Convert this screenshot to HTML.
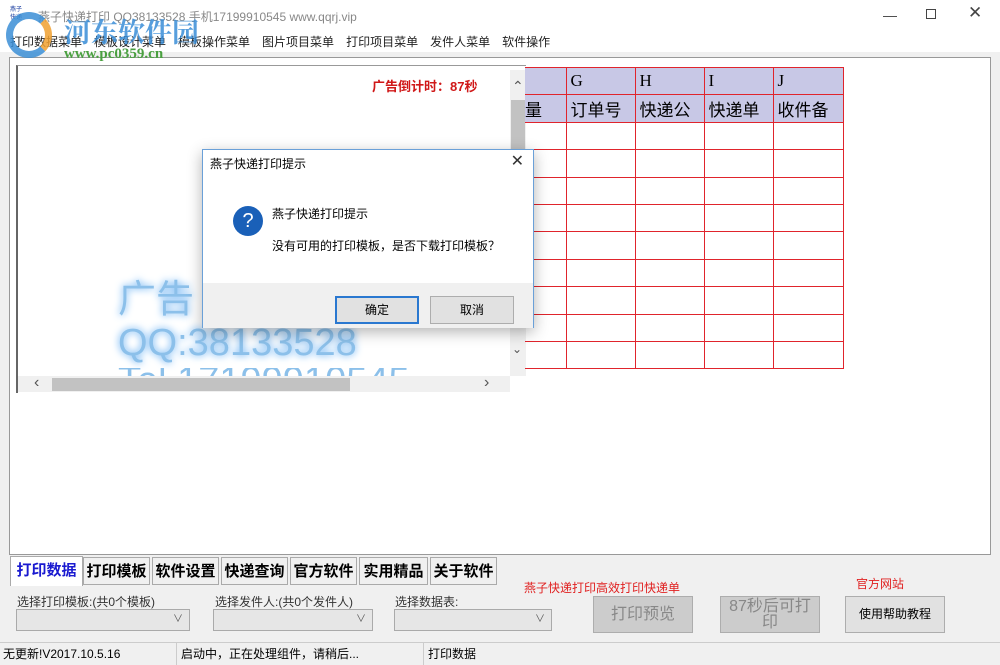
<!DOCTYPE html>
<html><head><meta charset="utf-8"><style>
*{margin:0;padding:0;box-sizing:border-box}
body{width:1000px;height:664px;background:#f0f0f0;font-family:"Liberation Sans","Noto Sans CJK SC",sans-serif;font-size:12px;color:#000;position:relative;overflow:hidden}
.a{position:absolute}
.menu span{margin-right:12px}
table{border-collapse:collapse;table-layout:fixed;font-family:"Liberation Serif","Noto Serif CJK SC",serif}
td{border:1px solid #e0242c;height:27.4px;width:69px;padding:0 4px;font-size:17px;white-space:nowrap;overflow:hidden;line-height:24px}
.hd td{background:#c8c8e6}
.tab{position:absolute;top:557px;height:28px;border:1px solid #aaa;background:#f0f0f0;font-size:15px;font-weight:bold;line-height:26px;text-align:center;font-family:"Noto Sans CJK SC",sans-serif}
.cb{position:absolute;height:22px;background:#e6e6e6;border:1px solid #aaa;font-size:10px;color:#555;text-align:right;padding-right:6px;line-height:20px}
.btn{position:absolute;border:1px solid #adadad;background:#e1e1e1;text-align:center}
</style></head><body>
<div class="a" style="left:0;top:0;width:1000px;height:52px;background:#fff"></div>
<div class="a" style="left:10px;top:6px;width:14px;height:16px;font-size:6px;color:#1a3ea0;line-height:8px">燕子<br>快递</div>
<div class="a" style="left:38px;top:8px;font-size:12px;color:#888">燕子快递打印 QQ38133528 手机17199910545 www.qqrj.vip</div>
<div class="a" style="left:883px;top:7px;font-size:14px;color:#444">—</div>
<div class="a" style="left:926px;top:9px;width:10px;height:10px;border:1px solid #444"></div>
<div class="a" style="left:968px;top:3px;font-size:17px;color:#444">✕</div>
<div class="a menu" style="left:10px;top:33px;font-size:12px;color:#222;width:1000px"><span>打印数据菜单</span><span>模板设计菜单</span><span>模板操作菜单</span><span>图片项目菜单</span><span>打印项目菜单</span><span>发件人菜单</span><span>软件操作</span></div>
<!-- watermark -->
<div class="a" style="left:6px;top:12px;width:46px;height:46px;border-radius:50%;border:7px solid #3b8fd6;border-right-color:#f0a030;opacity:.85"></div>
<div class="a" style="left:64px;top:11px;font-size:27px;font-weight:bold;color:#3a8ed8;font-family:'Noto Serif CJK SC',serif;opacity:.85">河东软件园</div>
<div class="a" style="left:64px;top:46px;font-size:15px;font-weight:bold;color:#4aa040;font-family:'Liberation Serif',serif">www.pc0359.cn</div>
<!-- main panel -->
<div class="a" style="left:9px;top:57px;width:982px;height:498px;border:1px solid #999;background:#fff;z-index:-1"></div>
<div class="a" style="left:16px;top:65px;width:510px;height:328px;border-left:2px solid #666;border-top:1px solid #999;background:#fff"></div>
<div class="a" style="left:372px;top:76px;font-size:13px;font-weight:bold;color:#d01818">广告倒计时：87秒</div>
<div class="a" style="left:118px;top:268px;font-size:38px;color:#8cc0ea;text-shadow:0 0 8px #4aa0f0">广告</div>
<div class="a" style="left:118px;top:322px;font-size:38px;color:#8cc0ea;text-shadow:0 0 8px #4aa0f0">QQ:38133528</div>
<div class="a" style="left:118px;top:368px;width:380px;height:8px;overflow:hidden"><div style="font-size:38px;color:#8cc0ea;margin-top:-8px">Tel 17199910545</div></div>
<div class="a" style="left:510px;top:70px;width:16px;height:306px;background:#f0f0f0"></div>
<div class="a" style="left:511px;top:100px;width:14px;height:50px;background:#c2c2c2"></div>
<div class="a" style="left:512px;top:78px;font-size:14px;color:#555">⌃</div>
<div class="a" style="left:512px;top:342px;font-size:12px;color:#555">⌄</div>
<div class="a" style="left:18px;top:376px;width:492px;height:16px;background:#f0f0f0"></div>
<div class="a" style="left:52px;top:378px;width:298px;height:13px;background:#c2c2c2"></div>
<div class="a" style="left:34px;top:374px;font-size:16px;color:#555">‹</div>
<div class="a" style="left:484px;top:374px;font-size:16px;color:#555">›</div>
<!-- grid -->
<table class="a" style="left:525px;top:67px;width:318px">
<colgroup><col style="width:41px"><col style="width:69px"><col style="width:69px"><col style="width:69px"><col style="width:70px"></colgroup>
<tr class="hd"><td style="border-left:none"></td><td>G</td><td>H</td><td>I</td><td>J</td></tr>
<tr class="hd"><td style="border-left:none;font-family:'Noto Sans CJK SC',sans-serif;padding:0">量</td><td style="font-family:'Noto Sans CJK SC',sans-serif">订单号</td><td style="font-family:'Noto Sans CJK SC',sans-serif">快递公</td><td style="font-family:'Noto Sans CJK SC',sans-serif">快递单</td><td style="font-family:'Noto Sans CJK SC',sans-serif">收件备</td></tr>
<tr><td style="border-left:none"></td><td></td><td></td><td></td><td></td></tr>
<tr><td style="border-left:none"></td><td></td><td></td><td></td><td></td></tr>
<tr><td style="border-left:none"></td><td></td><td></td><td></td><td></td></tr>
<tr><td style="border-left:none"></td><td></td><td></td><td></td><td></td></tr>
<tr><td style="border-left:none"></td><td></td><td></td><td></td><td></td></tr>
<tr><td style="border-left:none"></td><td></td><td></td><td></td><td></td></tr>
<tr><td style="border-left:none"></td><td></td><td></td><td></td><td></td></tr>
<tr><td style="border-left:none"></td><td></td><td></td><td></td><td></td></tr>
<tr><td style="border-left:none"></td><td></td><td></td><td></td><td></td></tr>
</table>
<!-- dialog -->
<div class="a" style="left:202px;top:149px;width:332px;height:179px;background:#fff;border:1px solid #6aa0d8;box-shadow:0 4px 14px rgba(0,0,0,.3)">
<div class="a" style="left:7px;top:5px;font-size:12px">燕子快递打印提示</div>
<div class="a" style="right:9px;top:1px;font-size:16px;color:#333">✕</div>
<div class="a" style="left:30px;top:56px;width:30px;height:30px;border-radius:50%;background:#1a60b8;color:#fff;font-size:20px;text-align:center;line-height:30px">?</div>
<div class="a" style="left:69px;top:55px;font-size:12px">燕子快递打印提示</div>
<div class="a" style="left:69px;top:87px;font-size:12px">没有可用的打印模板，是否下载打印模板？</div>
<div class="a" style="left:0;top:133px;width:330px;height:45px;background:#f0f0f0"></div>
<div class="btn" style="left:132px;top:146px;width:84px;height:28px;border:2px solid #2a78d0;line-height:24px">确定</div>
<div class="btn" style="left:227px;top:146px;width:84px;height:28px;line-height:26px">取消</div>
</div>
<!-- tabs -->
<div class="tab" style="left:10px;top:556px;width:73px;height:30px;background:#fff;color:#1a1ad0;border-bottom:none">打印数据</div>
<div class="tab" style="left:83px;width:67px">打印模板</div>
<div class="tab" style="left:152px;width:67px">软件设置</div>
<div class="tab" style="left:221px;width:67px">快递查询</div>
<div class="tab" style="left:290px;width:67px">官方软件</div>
<div class="tab" style="left:359px;width:69px">实用精品</div>
<div class="tab" style="left:430px;width:67px">关于软件</div>
<div class="a" style="left:524px;top:579px;font-size:12px;color:#e02020">燕子快递打印高效打印快递单</div>
<div class="a" style="left:856px;top:575px;font-size:12px;color:#e02020">官方网站</div>
<div class="a" style="left:17px;top:593px;font-size:12px;color:#333">选择打印模板:(共0个模板)</div>
<div class="a" style="left:215px;top:593px;font-size:12px;color:#333">选择发件人:(共0个发件人)</div>
<div class="a" style="left:395px;top:593px;font-size:12px;color:#333">选择数据表:</div>
<div class="cb" style="left:16px;top:609px;width:174px">∨</div>
<div class="cb" style="left:213px;top:609px;width:160px">∨</div>
<div class="cb" style="left:394px;top:609px;width:158px">∨</div>
<div class="btn" style="left:593px;top:596px;width:100px;height:37px;background:#ccc;color:#888;font-size:16px;line-height:35px">打印预览</div>
<div class="btn" style="left:720px;top:596px;width:100px;height:37px;background:#ccc;color:#888;font-size:16px;line-height:16px;padding-top:2px">87秒后可打<br>印</div>
<div class="btn" style="left:845px;top:596px;width:100px;height:37px;line-height:35px;font-size:12px">使用帮助教程</div>
<!-- status -->
<div class="a" style="left:0;top:642px;width:1000px;height:22px;border-top:1px solid #ccc;font-size:12px;line-height:22px">
<span class="a" style="left:3px">无更新!V2017.10.5.16</span>
<span class="a" style="left:176px;top:0;height:22px;border-left:1px solid #ccc"></span>
<span class="a" style="left:181px">启动中，正在处理组件，请稍后...</span>
<span class="a" style="left:423px;top:0;height:22px;border-left:1px solid #ccc"></span>
<span class="a" style="left:428px">打印数据</span></div>
</body></html>
